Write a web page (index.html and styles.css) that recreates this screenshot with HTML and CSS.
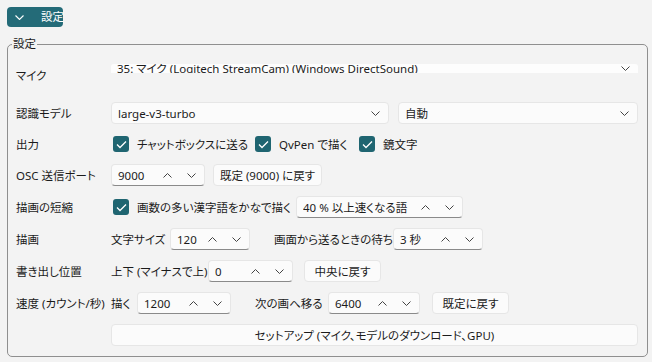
FILE: index.html
```html
<!DOCTYPE html>
<html lang="ja">
<head>
<meta charset="utf-8">
<title>設定</title>
<link rel="stylesheet" href="styles.css">
</head>
<body>
<div class="page">
  <button class="expander">
    <svg class="exp-chev" width="9" height="5" viewBox="0 0 9 5"><polyline points="0.5,0.5 4.5,4.5 8.5,0.5" fill="none" stroke="#fff" stroke-width="1.1"/></svg>
    <span>設定</span>
  </button>

  <fieldset class="group">
    <legend>設定</legend>

    <div class="row row-mic">
      <span class="label">マイク</span>
      <div class="combo combo-mic">
        <span class="mic-text">35: マイク (Logitech StreamCam) (Windows DirectSound)</span>
        <svg class="chev" width="9" height="5" viewBox="0 0 9 5"><polyline points="0.5,0.5 4.5,4.5 8.5,0.5" fill="none" stroke="#444" stroke-width="1"/></svg>
      </div>
    </div>

    <div class="row">
      <span class="label">認識モデル</span>
      <div class="combo w278">
        <span class="val">large-v3-turbo</span>
        <svg class="chev" width="9" height="5" viewBox="0 0 9 5"><polyline points="0.5,0.5 4.5,4.5 8.5,0.5" fill="none" stroke="#444" stroke-width="1"/></svg>
      </div>
      <div class="combo grow ml9">
        <span class="val">自動</span>
        <svg class="chev" width="9" height="5" viewBox="0 0 9 5"><polyline points="0.5,0.5 4.5,4.5 8.5,0.5" fill="none" stroke="#444" stroke-width="1"/></svg>
      </div>
    </div>

    <div class="row row-short">
      <span class="label">出力</span>
      <label class="check w142"><span class="box"><svg width="11" height="9" viewBox="0 0 11 9"><polyline points="1,4.5 4,7.5 10,1.5" fill="none" stroke="#fff" stroke-width="1.3"/></svg></span>チャットボックスに送る</label>
      <label class="check w104"><span class="box"><svg width="11" height="9" viewBox="0 0 11 9"><polyline points="1,4.5 4,7.5 10,1.5" fill="none" stroke="#fff" stroke-width="1.3"/></svg></span>QvPen で描く</label>
      <label class="check"><span class="box"><svg width="11" height="9" viewBox="0 0 11 9"><polyline points="1,4.5 4,7.5 10,1.5" fill="none" stroke="#fff" stroke-width="1.3"/></svg></span>鏡文字</label>
    </div>

    <div class="row">
      <span class="label">OSC 送信ポート</span>
      <div class="spin w94">
        <span class="val">9000</span>
        <svg class="up" width="9" height="5" viewBox="0 0 9 5"><polyline points="0.5,4.5 4.5,0.5 8.5,4.5" fill="none" stroke="#444" stroke-width="1"/></svg>
        <svg class="down" width="9" height="5" viewBox="0 0 9 5"><polyline points="0.5,0.5 4.5,4.5 8.5,0.5" fill="none" stroke="#444" stroke-width="1"/></svg>
      </div>
      <button class="btn w109 ml8">既定 (9000) に戻す</button>
    </div>

    <div class="row">
      <span class="label">描画の短縮</span>
      <label class="check w185"><span class="box"><svg width="11" height="9" viewBox="0 0 11 9"><polyline points="1,4.5 4,7.5 10,1.5" fill="none" stroke="#fff" stroke-width="1.3"/></svg></span>画数の多い漢字語をかなで描く</label>
      <div class="spin w167">
        <span class="val">40 % 以上速くなる語</span>
        <svg class="up" width="9" height="5" viewBox="0 0 9 5"><polyline points="0.5,4.5 4.5,0.5 8.5,4.5" fill="none" stroke="#444" stroke-width="1"/></svg>
        <svg class="down" width="9" height="5" viewBox="0 0 9 5"><polyline points="0.5,0.5 4.5,4.5 8.5,0.5" fill="none" stroke="#444" stroke-width="1"/></svg>
      </div>
    </div>

    <div class="row">
      <span class="label">描画</span>
      <span class="text w59">文字サイズ</span>
      <div class="spin w80">
        <span class="val">120</span>
        <svg class="up" width="9" height="5" viewBox="0 0 9 5"><polyline points="0.5,4.5 4.5,0.5 8.5,4.5" fill="none" stroke="#444" stroke-width="1"/></svg>
        <svg class="down" width="9" height="5" viewBox="0 0 9 5"><polyline points="0.5,0.5 4.5,4.5 8.5,0.5" fill="none" stroke="#444" stroke-width="1"/></svg>
      </div>
      <span class="text w119 ml24">画面から送るときの待ち</span>
      <div class="spin w90">
        <span class="val">3 秒</span>
        <svg class="up" width="9" height="5" viewBox="0 0 9 5"><polyline points="0.5,4.5 4.5,0.5 8.5,4.5" fill="none" stroke="#444" stroke-width="1"/></svg>
        <svg class="down" width="9" height="5" viewBox="0 0 9 5"><polyline points="0.5,0.5 4.5,4.5 8.5,0.5" fill="none" stroke="#444" stroke-width="1"/></svg>
      </div>
    </div>

    <div class="row">
      <span class="label">書き出し位置</span>
      <span class="text w97">上下 (マイナスで上)</span>
      <div class="spin w85">
        <span class="val">0</span>
        <svg class="up" width="9" height="5" viewBox="0 0 9 5"><polyline points="0.5,4.5 4.5,0.5 8.5,4.5" fill="none" stroke="#444" stroke-width="1"/></svg>
        <svg class="down" width="9" height="5" viewBox="0 0 9 5"><polyline points="0.5,0.5 4.5,4.5 8.5,0.5" fill="none" stroke="#444" stroke-width="1"/></svg>
      </div>
      <button class="btn w77 ml11">中央に戻す</button>
    </div>

    <div class="row">
      <span class="label">速度 (カウント/秒)</span>
      <span class="text w26">描く</span>
      <div class="spin w94">
        <span class="val">1200</span>
        <svg class="up" width="9" height="5" viewBox="0 0 9 5"><polyline points="0.5,4.5 4.5,0.5 8.5,4.5" fill="none" stroke="#444" stroke-width="1"/></svg>
        <svg class="down" width="9" height="5" viewBox="0 0 9 5"><polyline points="0.5,0.5 4.5,4.5 8.5,0.5" fill="none" stroke="#444" stroke-width="1"/></svg>
      </div>
      <span class="text w73 ml24">次の画へ移る</span>
      <div class="spin w92">
        <span class="val">6400</span>
        <svg class="up" width="9" height="5" viewBox="0 0 9 5"><polyline points="0.5,4.5 4.5,0.5 8.5,4.5" fill="none" stroke="#444" stroke-width="1"/></svg>
        <svg class="down" width="9" height="5" viewBox="0 0 9 5"><polyline points="0.5,0.5 4.5,4.5 8.5,0.5" fill="none" stroke="#444" stroke-width="1"/></svg>
      </div>
      <button class="btn w77 ml12">既定に戻す</button>
    </div>

    <div class="row">
      <span class="label"></span>
      <button class="btn grow">セットアップ (マイク、モデルのダウンロード、GPU)</button>
    </div>
  </fieldset>
</div>
</body>
</html>
```

FILE: styles.css
```css
* { box-sizing: border-box; }

html, body {
  margin: 0;
  padding: 0;
  background: #f3f3f3;
}

body {
  font-family: "Noto Sans", "Noto Sans CJK JP", sans-serif;
  font-size: 11.5px;
  color: #1b1b1b;
  font-feature-settings: "palt";
  width: 652px;
  height: 362px;
  overflow: hidden;
}

.page {
  padding: 7px 5px 0 7px;
}

.expander {
  display: flex;
  align-items: center;
  width: 56px;
  height: 20px;
  padding: 0 0 0 8px;
  margin: 0;
  border: none;
  border-radius: 4px;
  background: #246b78;
  color: #fff;
  font: inherit;
  line-height: 20px;
  white-space: nowrap;
}

.exp-chev { margin-right: 17px; flex: none; }

.group {
  margin: 9px 0 0 0;
  width: 641px;
  height: 321px;
  padding: 6px 9px 10px 8px;
  border: 1px solid #8f8f8f;
  border-radius: 5px;
  display: flex;
  flex-direction: column;
  gap: 10px;
}

.group legend {
  margin-left: -4px;
  padding: 0 1px;
  line-height: 16px;
}

.row {
  display: flex;
  align-items: center;
  height: 22px;
  white-space: nowrap;
}

.row-mic {
  height: 34px;
}

.row-short { height: 20px; }

.label {
  width: 95px;
  flex: none;
}

.text { flex: none; }

.combo, .spin, .btn {
  height: 22px;
  background: #fbfbfb;
  border: 1px solid #e6e6e6;
  border-radius: 4px;
  display: flex;
  align-items: center;
  flex: none;
  font: inherit;
  color: inherit;
}

.combo { padding: 0 8px 0 6px; }

.combo .val, .spin .val {
  flex: 1;
  overflow: hidden;
}

.combo-mic {
  align-self: flex-start;
  margin-top: 6px;
  height: 9px;
  flex: 1;
  border: none;
  border-radius: 3px 3px 0 0;
  background: #fdfdfd;
  overflow: hidden;
  align-items: flex-start;
}

.mic-text {
  flex: 1;
  line-height: 14px;
  margin-top: -2px;
}

.combo-mic .chev { margin-top: 2px; }

.spin {
  padding: 0 8px 0 6px;
  border-bottom-color: #8a8a8a;
}

.spin .up { margin-right: 15px; }

.btn {
  justify-content: center;
  padding: 0;
  margin: 0;
}

.check {
  display: flex;
  align-items: center;
  flex: none;
}

.box {
  width: 16px;
  height: 16px;
  margin: 0 8px 0 2px;
  border-radius: 3px;
  background: #1f6571;
  display: flex;
  align-items: center;
  justify-content: center;
}

.grow { flex: 1; }

.w26 { width: 26px; }
.w59 { width: 59px; }
.w73 { width: 73px; }
.w77 { width: 77px; }
.w80 { width: 80px; }
.w85 { width: 85px; }
.w90 { width: 90px; }
.w92 { width: 92px; }
.w94 { width: 94px; }
.w97 { width: 97px; }
.w104 { width: 104px; }
.w109 { width: 109px; }
.w119 { width: 119px; }
.w142 { width: 142px; }
.w167 { width: 167px; }
.w185 { width: 185px; }
.w278 { width: 278px; }

.ml8 { margin-left: 8px; }
.ml9 { margin-left: 9px; }
.ml11 { margin-left: 11px; }
.ml12 { margin-left: 12px; }
.ml24 { margin-left: 24px; }
```
